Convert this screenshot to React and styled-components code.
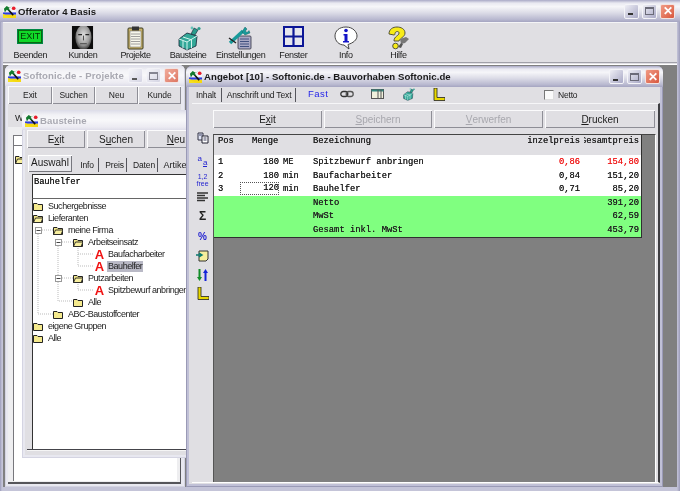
import React from 'react';
import styled, { createGlobalStyle } from 'styled-components';

const GlobalStyle = createGlobalStyle`
  html, body {
    margin: 0;
    width: 680px;
    height: 491px;
    overflow: hidden;
    background: #808080;
  }
  * { box-sizing: border-box; }
`;

const SILVER = '#e0dfe3';
const UI_FONT = '"Liberation Sans", Arial, sans-serif';
const MONO_FONT = '"Liberation Mono", "Courier New", monospace';

const MainFrame = styled.div`
  width: 680px;
  height: 491px;
  display: flex;
  flex-direction: column;
  padding: 0 3px 4px;
  background: linear-gradient(90deg, #9c9cba 0, #c4c4d8 2px, #c4c4d8 677px, #9c9cba 680px);
  font-family: ${UI_FONT};
  color: #1c1c1c;
  filter: blur(0.4px);
`;

const TitleBar = styled.div`
  flex: none;
  height: ${(p) => p.$height || 21}px;
  margin: 0 -3px;
  padding: 0 ${(p) => p.$padRight ?? 3}px 0 3px;
  display: flex;
  align-items: center;
  gap: 2px;
  background: ${(p) =>
    p.$active
      ? 'linear-gradient(#a9a9c6 0, #e9e9f1 14%, #f6f6f9 30%, #dcdce7 58%, #b9b9d0 88%, #a5a5c1 100%)'
      : 'linear-gradient(#dcdce8 0, #f2f2f6 25%, #f8f8fa 50%, #ecebf2 85%, #dedde9 100%)'};
`;

const TitleText = styled.span`
  flex: 1;
  min-width: 0;
  font-size: 9.6px;
  font-weight: 700;
  letter-spacing: ${(p) => (p.$active ? '0.05px' : '0.1px')};
  color: ${(p) => (p.$active ? '#1a1a1a' : '#a9a9b2')};
  white-space: nowrap;
  overflow: hidden;
`;

const CaptionButtons = styled.div`
  display: flex;
  gap: 3px;
  flex: none;
`;

const CaptionButton = styled.div`
  width: 15px;
  height: 15px;
  border-radius: 2px;
  border: 1px solid ${(p) => (p.$close ? '#f3e3e0' : '#f4f4f8')};
  display: flex;
  align-items: center;
  justify-content: center;
  background: ${(p) =>
    p.$close
      ? 'linear-gradient(135deg, #f09a84, #d9583e)'
      : p.$active
        ? 'linear-gradient(135deg, #eeeef5, #a9a9c6)'
        : 'linear-gradient(135deg, #f6f6fa, #cfcfe0)'};
  opacity: ${(p) => (p.$active ? 1 : 0.8)};
`;

const MinMark = styled.i`
  width: 5px;
  height: 2px;
  margin-top: 6px;
  margin-right: 3px;
  background: #333;
`;

const MaxMark = styled.i`
  width: 9px;
  height: 8px;
  border: 1px solid #6a6a78;
  border-top-width: 2px;
`;

const CloseMark = styled.span`
  font-family: ${UI_FONT};
  font-weight: 700;
  font-size: 12px;
  line-height: 1;
  color: #fff;
`;

const Toolbar = styled.div`
  flex: none;
  height: 40px;
  padding-left: 1px;
  display: grid;
  grid-template-columns: repeat(8, 52.6px);
  background: ${SILVER};
  border-top: 1px solid #f4f4f6;
`;

const ToolItem = styled.div`
  display: flex;
  flex-direction: column;
  align-items: center;
  font-size: 9px;
  letter-spacing: -0.35px;
  white-space: nowrap;
`;

const ToolIcon = styled.div`
  height: 26px;
  padding-top: 3px;
  margin-bottom: 1px;
`;

const ExitSign = styled.div`
  width: 24px;
  height: 13px;
  margin-top: 4px;
  background: #10d828;
  border: 1px solid #0a6a10;
  outline: 1px solid #084;
  color: #053305;
  font-size: 9px;
  line-height: 11px;
  text-align: center;
  letter-spacing: 0;
`;

const Etch = styled.div`
  flex: none;
  height: 3px;
  background: ${SILVER};
  border-top: 1px solid #a0a0a8;
  border-bottom: 1px solid #fff;
`;

const Desktop = styled.div`
  flex: 1;
  position: relative;
  overflow: hidden;
  background: #808080;
`;

const Window = styled.div`
  position: absolute;
  left: ${(p) => p.$left}px;
  top: ${(p) => p.$top}px;
  width: ${(p) => p.$width}px;
  height: ${(p) => p.$height}px;
  display: flex;
  flex-direction: column;
  padding: 0 ${(p) => p.$padRight ?? 3}px 3px 3px;
  border-radius: 6px 6px 0 0;
  overflow: hidden;
  background: ${(p) => (p.$active ? '#c0c0d6' : '#e8e8f0')};
  box-shadow: inset 0 0 0 1px ${(p) => (p.$active ? '#9a9ab6' : '#d4d4e2')};
`;

const Client = styled.div`
  flex: 1;
  min-height: 0;
  display: flex;
  flex-direction: column;
  background: ${(p) => p.$bg || SILVER};
  padding: ${(p) => p.$padding || '0'};
`;

const ButtonRow = styled.div`
  flex: none;
  display: flex;
  gap: ${(p) => p.$gap ?? 1}px;
  margin-left: ${(p) => p.$indent || 0}px;
  height: ${(p) => p.$height}px;
`;

const PushButton = styled.div`
  width: ${(p) => p.$width}px;
  flex: none;
  display: flex;
  align-items: center;
  justify-content: center;
  font-size: ${(p) => p.$size || 10}px;
  letter-spacing: ${(p) => (p.$size ? '-0.1px' : '0')};
  color: ${(p) => (p.$disabled ? '#a8a8ae' : '#1c1c1c')};
  background: ${SILVER};
  box-shadow: inset 1px 1px #fbfbfc, inset -1px -1px #8e8e96;
  u { text-decoration: underline; }
`;

const ProjectTab = styled.div`
  margin: 8px 0 2px 7px;
  width: 30px;
  height: 13px;
  font-size: 9px;
  line-height: 13px;
`;

const ProjectPage = styled.div`
  flex: 1;
  display: flex;
  flex-direction: column;
  padding: 8px 3px 1px 5px;
  background: #eeeef0;
  border-bottom: 2px solid #55555a;
  border-right: 1px solid #55555a;
`;

const ProjectInput = styled.div`
  height: 11px;
  flex: none;
  background: #fff;
  border: 1px solid #77777c;
  border-right: 0;
`;

const ProjectList = styled.div`
  flex: 1;
  padding: 4px 1px;
  background: #fff;
  border-left: 1px solid #77777c;
`;

const TabRow = styled.div`
  flex: none;
  height: ${(p) => p.$height}px;
  margin-top: ${(p) => p.$top || 0}px;
  display: flex;
  align-items: ${(p) => p.$align || 'center'};
  padding-left: ${(p) => p.$indent || 0}px;
`;

const Tab = styled.div`
  flex: none;
  width: ${(p) => p.$width}px;
  margin-right: ${(p) => p.$gap ?? 3}px;
  padding-right: ${(p) => p.$padRight || 0}px;
  height: ${(p) => (p.$active ? 17 : 14)}px;
  text-align: center;
  line-height: ${(p) => (p.$active ? 16 : 14)}px;
  font-size: ${(p) => p.$size || 8.5}px;
  letter-spacing: ${(p) => (p.$size ? 0 : '-0.15px')};
  white-space: nowrap;
  background: ${(p) => (p.$active ? '#e8e8ec' : 'transparent')};
  box-shadow: ${(p) =>
    p.$active
      ? 'inset 1px 1px #fff, inset -1px -1px #77777e'
      : 'inset -1px 0 #55555c'};
`;

const BlockFrame = styled.div`
  flex: 1;
  min-height: 0;
  margin-top: 2px;
  padding-left: 5px;
  display: flex;
  flex-direction: column;
  background: ${SILVER};
  border-bottom: 1px solid #44444a;
  box-shadow: 0 1px 0 #f5f5f5;
`;

const SearchBox = styled.div`
  flex: none;
  height: 25px;
  padding: 2px 1px;
  background: #fff;
  border-top: 1px solid #333;
  border-left: 1px solid #333;
  border-bottom: 1px solid #666;
  font-family: ${MONO_FONT};
  font-size: 8.8px;
  letter-spacing: -0.1px;
  text-shadow: 0 0 0.5px #222;
`;

const TreeList = styled.div`
  flex: 1;
  position: relative;
  padding-top: 1px;
  background: #fff;
  border-left: 1px solid #333;
  font-size: 9px;
  letter-spacing: -0.46px;
`;

const TreeLines = styled.svg`
  position: absolute;
  left: 0;
  top: 0;
  width: 120px;
  height: 150px;
`;

const TreeRow = styled.div`
  position: relative;
  height: 12px;
  display: flex;
  align-items: center;
  padding-left: ${(p) => p.$indent}px;
  white-space: nowrap;
`;

const TreeLabel = styled.span`
  margin-left: ${(p) => p.$gap ?? 4}px;
  padding: 0 1px;
  height: 11px;
  line-height: 11px;
  background: ${(p) => (p.$selected ? '#b9b9c6' : 'transparent')};
`;

const ArticleGlyph = styled.span`
  width: 11px;
  text-align: center;
  font-weight: 700;
  font-size: 13px;
  letter-spacing: 0;
  line-height: 11px;
  height: 11px;
  color: #f01010;
`;

const OfferTabs = styled.div`
  flex: none;
  height: 16px;
  display: flex;
  align-items: center;
  padding-left: 5px;
  position: relative;
`;

const FastLabel = styled.span`
  margin-left: 12px;
  width: 32px;
  margin-top: -3px;
  font-size: 9.5px;
  letter-spacing: 0.5px;
  color: #2525e8;
`;

const TopIcon = styled.div`
  flex: none;
  width: 31px;
  display: flex;
  align-items: center;
  margin-top: -2px;
`;

const NettoCheck = styled.div`
  position: absolute;
  left: 355px;
  top: 3px;
  display: flex;
  align-items: center;
  gap: 4px;
  font-size: 8.5px;
  letter-spacing: -0.2px;
`;

const CheckBox = styled.div`
  width: 10px;
  height: 10px;
  background: #fafafa;
  border-top: 1px solid #777;
  border-left: 1px solid #777;
  border-right: 1px solid #ddd;
  border-bottom: 1px solid #ddd;
`;

const OfferPage = styled.div`
  flex: 1;
  min-height: 0;
  display: flex;
  flex-direction: column;
  margin: 0 0 1px 3px;
  padding-top: 6px;
  background: ${SILVER};
  border-top: 1px solid #f6f6f8;
  border-right: 2px solid #3e3e42;
  border-bottom: 1px solid #fff;
`;

const OfferBody = styled.div`
  flex: 1;
  min-height: 0;
  display: flex;
  margin-top: 6px;
`;

const SideTools = styled.div`
  flex: none;
  width: 21px;
  display: flex;
  flex-direction: column;
  align-items: center;
`;

const SideTool = styled.div`
  flex: none;
  height: ${(p) => p.$height || 19}px;
  margin-top: ${(p) => p.$top || 0}px;
  width: 21px;
  display: flex;
  flex-direction: ${(p) => (p.$stack ? 'column' : 'row')};
  align-items: center;
  justify-content: center;
  color: ${(p) => p.$color || '#222'};
  font-size: ${(p) => p.$size || 8}px;
  font-weight: ${(p) => p.$weight || 400};
  line-height: 7px;
`;

const LowerLetter = styled.span`
  margin: 6px 0 0 1px;
  border-bottom: 1px solid #2424d0;
`;

const RaisedLetter = styled.span`
  margin-bottom: 3px;
`;

const GridArea = styled.div`
  flex: 1;
  min-width: 0;
  background: #808080;
  border-top: 1px solid #444;
  border-left: 1px solid #555;
  margin-right: 2px;
  border-right: 1px solid #fff;
`;

const OfferGrid = styled.div`
  width: 428px;
  border-right: 1px solid #303030;
  border-bottom: 1px solid #303030;
  font-family: ${MONO_FONT};
  font-size: 8.8px;
  color: #222;
  text-shadow: 0 0 0.5px currentColor;
`;

const GridRow = styled.div`
  display: grid;
  grid-template-columns: 34px 27px 34px 215px 52px 59px;
  padding-left: 4px;
  height: ${(p) => p.$height || 13.6}px;
  line-height: ${(p) => (p.$header ? 12 : 13.4)}px;
  background: ${(p) => p.$bg || '#fff'};
`;

const Cell = styled.div`
  white-space: nowrap;
  display: flex;
  overflow: hidden;
  justify-content: ${(p) => (p.$right ? 'flex-end' : 'flex-start')};
  padding-left: ${(p) => p.$pad || 0}px;
  padding-top: ${(p) => (p.$flush ? 0 : 1)}px;
  margin-left: ${(p) => p.$inset || 0}px;
  color: ${(p) => (p.$alert ? '#f02020' : 'inherit')};
  span { flex: none; }
`;

const FocusCell = styled(Cell)`
  margin-left: -12px;
  height: 13px;
  outline: 1px dotted #555;
  outline-offset: -1px;
`;

// small drawings

const AppIcon = () => (
  <svg width="13" height="13" viewBox="0 0 14 14" style={{ flex: 'none' }}>
    <rect width="14" height="14" fill="#f4f4f4" />
    <rect y="8" width="14" height="2.5" fill="#2a3ce0" />
    <path d="M0 14V9.5L9 14z" fill="#f5e020" />
    <path d="M0 10.5 8 14H14V10.5z" fill="#f5d810" />
    <path d="M4 3 11 11" stroke="#111" strokeWidth="1.8" />
    <path d="M1 4 4 1 7 3 10 1 6 4 8 7 4 5 2 8z" fill="#127a2e" />
    <circle cx="11.5" cy="3.5" r="2" fill="#e81c2c" />
  </svg>
);

const Caption = ({ active }) => (
  <CaptionButtons>
    <CaptionButton $active={active}><MinMark /></CaptionButton>
    <CaptionButton $active={active}><MaxMark /></CaptionButton>
    <CaptionButton $active={active} $close><CloseMark>✕</CloseMark></CaptionButton>
  </CaptionButtons>
);

const FaceIcon = () => (
  <svg width="23" height="23" viewBox="0 0 22 24">
    <defs>
      <radialGradient id="face" cx="50%" cy="42%" r="55%">
        <stop offset="0" stopColor="#e4e4e4" />
        <stop offset="0.7" stopColor="#9a9a9a" />
        <stop offset="1" stopColor="#444" />
      </radialGradient>
    </defs>
    <rect width="22" height="24" fill="#0c0c0c" />
    <ellipse cx="12" cy="12" rx="8.500" ry="13" fill="url(#face)" />
    <path d="M6.500 9h4M14 9h4" stroke="#222" strokeWidth="1.400" />
    <path d="M12 10v5M8.500 18.500h7" stroke="#444" strokeWidth="1" />
  </svg>
);

const ClipboardIcon = () => (
  <svg width="17" height="24" viewBox="0 0 17 24">
    <rect x="1" y="2" width="15" height="21" rx="1" fill="#c9b36a" stroke="#3a3a20" />
    <rect x="3" y="5" width="11" height="16" fill="#f6f6ea" stroke="#666" strokeWidth="0.5" />
    <path d="M4 8h9M4 10.5h9M4 13h9M4 15.5h9M4 18h9" stroke="#8a8a8a" strokeWidth="0.8" />
    <rect x="5" y="0.5" width="7" height="4" fill="#333" />
  </svg>
);

const CubesIcon = ({ size = 25 }) => (
  <svg width={size} height={size} viewBox="0 0 25 25">
    <path d="M3 13 11 7 21 10 20 20 11 24 3 20z" fill="#33a898" stroke="#123" strokeWidth="0.8" />
    <path d="M3 13 11 16 21 10M11 16V24M7 11l9 3M7 14.5V22M15.5 13v9" stroke="#d4f4ee" strokeWidth="1" fill="none" />
    <path d="M15 8 18 2 22 4 19 9z" fill="#2a9c8c" stroke="#123" strokeWidth="0.6" />
    <circle cx="23" cy="2.5" r="1.6" fill="#2a9c8c" />
    <circle cx="16" cy="2" r="1.4" fill="#66c4b8" />
  </svg>
);

const SettingsIcon = () => (
  <svg width="25" height="24" viewBox="0 0 25 24">
    <rect x="10" y="10" width="13" height="13" rx="1" fill="#a8a8c4" stroke="#334" strokeWidth="0.8" />
    <path d="M12 13h9M12 15.5h9M12 18h9M12 20.5h9" stroke="#405080" strokeWidth="1" />
    <path d="M2 17 15 5" stroke="#189a9a" strokeWidth="3.4" />
    <path d="M14 6 17 1 19 3 17.5 5 19 6.5 21 4.5 22 7 17 9z" fill="#189a9a" stroke="#0a5050" strokeWidth="0.4" />
    <path d="M1 12 8 17" stroke="#222" strokeWidth="1.4" />
  </svg>
);

const GridIcon = () => (
  <svg width="21" height="21" viewBox="0 0 21 21">
    <rect x="1" y="1" width="19" height="19" fill="#e6e6ee" stroke="#0c1696" strokeWidth="2" />
    <path d="M10.5 1v19M1 10.5h19" stroke="#0c1696" strokeWidth="2.2" />
  </svg>
);

const InfoIcon = () => (
  <svg width="26" height="24" viewBox="0 0 26 24">
    <path d="M13 1C6 1 2 5 2 10s4 9 9 9l5 4-1-4.500C20 17 24 14 24 10S20 1 13 1z" fill="#fff" stroke="#333" strokeWidth="0.9" />
    <circle cx="13" cy="4.500" r="1.800" fill="#1414c8" />
    <path d="M10.500 8h4v7h1.500v1.500h-6V15h1.500V9.500h-1z" fill="#1414c8" />
  </svg>
);

const HelpIcon = () => (
  <svg width="24" height="25" viewBox="0 0 24 25">
    <path d="M3 8C3 3 7 1 11 1s8 2 8 6c0 4-5 5-6 8H8c0-5 5-5 5-8 0-2-3-2-4 0 0 1 0 2-1 2z" fill="#f8ec18" stroke="#443" strokeWidth="0.9" />
    <circle cx="9.500" cy="20" r="2.800" fill="#f8ec18" stroke="#443" strokeWidth="0.9" />
    <path d="M14 13l6-2 3 2-4 4-4 1z" fill="#777" />
    <path d="M12 21l3-4 2 1-2 4z" fill="#555" />
  </svg>
);

const FolderIcon = ({ open }) => (
  <svg width="10" height="9" viewBox="0 0 10 9" style={{ flex: 'none' }}>
    <path d="M0.500 8.500V1.500H4l1 1h4.500v6z" fill="#f4e98c" stroke="#222" />
    {open && <path d="M0.500 8.500 2.500 4H10L8 8.500z" fill="#f8ef9e" stroke="#222" strokeWidth="0.9" />}
  </svg>
);

const ChainIcon = () => (
  <svg width="14" height="8" viewBox="0 0 14 8">
    <rect x="0.800" y="1.500" width="7" height="5" rx="2.500" fill="none" stroke="#333" strokeWidth="1.300" />
    <rect x="6.200" y="1.500" width="7" height="5" rx="2.500" fill="none" stroke="#555" strokeWidth="1.300" />
  </svg>
);

const TableIcon = () => (
  <svg width="13" height="10" viewBox="0 0 13 10">
    <rect x="0.500" y="0.500" width="12" height="9" fill="#f0f0dc" stroke="#555" />
    <rect x="0.500" y="0.500" width="12" height="2" fill="#338880" />
    <path d="M7 1v8M10 1v8" stroke="#555" />
  </svg>
);

const RulerIcon = () => (
  <svg width="12" height="13" viewBox="0 0 12 13">
    <path d="M1 0H4V9.500H12V12.500H1z" fill="#e8d800" stroke="#222" strokeWidth="0.800" />
  </svg>
);

const CopyIcon = () => (
  <svg width="12" height="12" viewBox="0 0 12 12" style={{ flex: 'none' }}>
    <path d="M1 1H6V8H1z" fill="#dfe4f4" stroke="#334" />
    <path d="M5 4H11V11H5z" fill="#fff" stroke="#223" />
    <path d="M6.500 6h3M6.500 8h3M2 3h3" stroke="#446" />
  </svg>
);

const LinesIcon = () => (
  <svg width="11" height="10" viewBox="0 0 11 10">
    <path d="M0 1h11M0 3.500h8M0 6h11M0 8.500h8" stroke="#333" strokeWidth="1.400" />
  </svg>
);

const NoteIcon = () => (
  <svg width="13" height="12" viewBox="0 0 13 12">
    <path d="M3 1H12V9L10 11H3z" fill="#f6ee9c" stroke="#333" />
    <path d="M0 5H5M3 3l3 2-3 2" stroke="#0a7a70" strokeWidth="1.500" fill="none" />
  </svg>
);

const UpDownIcon = () => (
  <svg width="11" height="12" viewBox="0 0 11 12">
    <path d="M2.500 0V9" stroke="#128c28" strokeWidth="2" />
    <path d="M0 8H5L2.500 12z" fill="#128c28" />
    <path d="M8.500 3V12" stroke="#1424d8" strokeWidth="2" />
    <path d="M6 4H11L8.500 0z" fill="#1424d8" />
  </svg>
);

const Tree = () => (
  <TreeList>
    <TreeLines viewBox="0 0 120 150">
      <g stroke="#bbb" strokeDasharray="1 1" fill="none">
        <path d="M5 31V115H20M5 31H20" />
        <path d="M25 43V102H40M25 43H40M25 79H40" />
        <path d="M45 43V67H61M45 55H61M45 79V91H61" />
      </g>
      <g fill="#fff" stroke="#999">
        <rect x="2.500" y="28.500" width="6" height="6" />
        <rect x="22.500" y="40.500" width="6" height="6" />
        <rect x="22.500" y="76.500" width="6" height="6" />
      </g>
      <path d="M3.500 31.500h4M23.500 43.500h4M23.500 79.500h4" stroke="#444" />
    </TreeLines>
    <TreeRow $indent={0}><FolderIcon /><TreeLabel>Suchergebnisse</TreeLabel></TreeRow>
    <TreeRow $indent={0}><FolderIcon open /><TreeLabel>Lieferanten</TreeLabel></TreeRow>
    <TreeRow $indent={20}><FolderIcon open /><TreeLabel>meine Firma</TreeLabel></TreeRow>
    <TreeRow $indent={40}><FolderIcon open /><TreeLabel>Arbeitseinsatz</TreeLabel></TreeRow>
    <TreeRow $indent={61}><ArticleGlyph>A</ArticleGlyph><TreeLabel $gap={2}>Baufacharbeiter</TreeLabel></TreeRow>
    <TreeRow $indent={61}><ArticleGlyph>A</ArticleGlyph><TreeLabel $gap={2} $selected>Bauhelfer</TreeLabel></TreeRow>
    <TreeRow $indent={40}><FolderIcon open /><TreeLabel>Putzarbeiten</TreeLabel></TreeRow>
    <TreeRow $indent={61}><ArticleGlyph>A</ArticleGlyph><TreeLabel $gap={2}>Spitzbewurf anbringen</TreeLabel></TreeRow>
    <TreeRow $indent={40}><FolderIcon /><TreeLabel>Alle</TreeLabel></TreeRow>
    <TreeRow $indent={20}><FolderIcon /><TreeLabel>ABC-Baustoffcenter</TreeLabel></TreeRow>
    <TreeRow $indent={0}><FolderIcon /><TreeLabel>eigene Gruppen</TreeLabel></TreeRow>
    <TreeRow $indent={0}><FolderIcon /><TreeLabel>Alle</TreeLabel></TreeRow>
  </TreeList>
);

const toolItems = [
  { label: 'Beenden', icon: <ExitSign>EXIT</ExitSign> },
  { label: 'Kunden', icon: <FaceIcon /> },
  { label: 'Projekte', icon: <ClipboardIcon /> },
  { label: 'Bausteine', icon: <CubesIcon /> },
  { label: 'Einstellungen', icon: <SettingsIcon /> },
  { label: 'Fenster', icon: <GridIcon /> },
  { label: 'Info', icon: <InfoIcon /> },
  { label: 'Hilfe', icon: <HelpIcon /> },
];

const positions = [
  { pos: '1', qty: '180', unit: 'ME', name: 'Spitzbewurf anbringen', price: '0,86', total: '154,80', alert: true },
  { pos: '2', qty: '180', unit: 'min', name: 'Baufacharbeiter', price: '0,84', total: '151,20' },
  { pos: '3', qty: '120', unit: 'min', name: 'Bauhelfer', price: '0,71', total: '85,20', focus: true },
];

const totals = [
  { name: 'Netto', total: '391,20' },
  { name: 'MwSt', total: '62,59' },
  { name: 'Gesamt inkl. MwSt', total: '453,79' },
];

export default function App() {
  return (
    <>
      <GlobalStyle />
      <MainFrame>
        <TitleBar $active $height={22} $padRight={5}>
          <AppIcon />
          <TitleText $active>Offerator 4 Basis</TitleText>
          <Caption active />
        </TitleBar>
        <Toolbar>
          {toolItems.map((item) => (
            <ToolItem key={item.label}>
              <ToolIcon>{item.icon}</ToolIcon>
              {item.label}
            </ToolItem>
          ))}
        </Toolbar>
        <Etch />
        <Desktop>
          <Window $left={2} $top={0} $width={180} $height={422} $padRight={4}>
            <TitleBar $padRight={5}>
              <AppIcon />
              <TitleText>Softonic.de - Projekte</TitleText>
              <Caption />
            </TitleBar>
            <Client>
              <ButtonRow $height={18} $gap={0}>
                <PushButton $width={44} $size={8.5}>Exit</PushButton>
                <PushButton $width={43} $size={8.5}>Suchen</PushButton>
                <PushButton $width={43} $size={8.5}>Neu</PushButton>
                <PushButton $width={43} $size={8.5}>Kunde</PushButton>
              </ButtonRow>
              <ProjectTab>Werte</ProjectTab>
              <ProjectPage>
                <ProjectInput />
                <ProjectList><FolderIcon open /></ProjectList>
              </ProjectPage>
            </Client>
          </Window>

          <Window $left={19} $top={45} $width={230} $height={348}>
            <TitleBar $height={20}>
              <AppIcon />
              <TitleText>Bausteine</TitleText>
            </TitleBar>
            <Client $padding="0 0 5px 2px">
              <ButtonRow $height={18} $gap={2}>
                <PushButton $width={58}>E<u>x</u>it</PushButton>
                <PushButton $width={58}>S<u>u</u>chen</PushButton>
                <PushButton $width={58}><u>N</u>eu</PushButton>
              </ButtonRow>
              <TabRow $height={17} $top={7} $indent={1} $align="flex-end">
                <Tab $active $width={44} $gap={3} $size={10}>Auswahl</Tab>
                <Tab $width={24}>Info</Tab>
                <Tab $width={25}>Preis</Tab>
                <Tab $width={28}>Daten</Tab>
                <Tab $width={30} $size={9}>Artikel</Tab>
              </TabRow>
              <BlockFrame>
                <SearchBox>Bauhelfer</SearchBox>
                <Tree />
              </BlockFrame>
            </Client>
          </Window>

          <Window $active $left={183} $top={1} $width={477} $height={421}>
            <TitleBar $active>
              <AppIcon />
              <TitleText $active>Angebot [10] - Softonic.de - Bauvorhaben Softonic.de</TitleText>
              <Caption active />
            </TitleBar>
            <Client>
              <OfferTabs>
                <Tab $width={28} $gap={2} $padRight={4}>Inhalt</Tab>
                <Tab $width={72} $gap={0} $padRight={2}>Anschrift und Text</Tab>
                <FastLabel>Fast</FastLabel>
                <TopIcon><ChainIcon /></TopIcon>
                <TopIcon><TableIcon /></TopIcon>
                <TopIcon><CubesIcon size={13} /></TopIcon>
                <TopIcon><RulerIcon /></TopIcon>
                <NettoCheck><CheckBox />Netto</NettoCheck>
              </OfferTabs>
              <OfferPage>
                <ButtonRow $height={18} $indent={21} $gap={2}>
                  <PushButton $width={109}>E<u>x</u>it</PushButton>
                  <PushButton $width={108} $disabled><u>S</u>peichern</PushButton>
                  <PushButton $width={109} $disabled><u>V</u>erwerfen</PushButton>
                  <PushButton $width={110}><u>D</u>rucken</PushButton>
                </ButtonRow>
                <OfferBody>
                  <SideTools>
                    <SideTool $height={8}><CopyIcon /></SideTool>
                    <SideTool $height={16} $top={10} $color="#2424d0" $size={8}>
                      <RaisedLetter>a</RaisedLetter>
                      <LowerLetter>a</LowerLetter>
                    </SideTool>
                    <SideTool $height={16} $top={4} $stack $color="#2424d0" $size={7}>
                      <span>1,2</span><span>free</span>
                    </SideTool>
                    <SideTool $height={18}><LinesIcon /></SideTool>
                    <SideTool $height={21} $size={12} $weight={700}>Σ</SideTool>
                    <SideTool $size={10} $weight={700} $color="#2424d0">%</SideTool>
                    <SideTool><NoteIcon /></SideTool>
                    <SideTool><UpDownIcon /></SideTool>
                    <SideTool><RulerIcon /></SideTool>
                  </SideTools>
                  <GridArea>
                    <OfferGrid>
                      <GridRow $bg={SILVER} $height={20} $header>
                        <Cell $flush>Pos</Cell>
                        <Cell $flush>Menge</Cell>
                        <Cell $flush />
                        <Cell $flush>Bezeichnung</Cell>
                        <Cell $flush $right><span>Einzelpreis</span></Cell>
                        <Cell $flush $right $inset={4}><span>Gesamtpreis</span></Cell>
                      </GridRow>
                      {positions.map((row) => {
                        const Qty = row.focus ? FocusCell : Cell;
                        return (
                          <GridRow key={row.pos}>
                            <Cell>{row.pos}</Cell>
                            <Qty $right $flush={row.focus}>{row.qty}</Qty>
                            <Cell $pad={4}>{row.unit}</Cell>
                            <Cell>{row.name}</Cell>
                            <Cell $right $alert={row.alert}>{row.price}</Cell>
                            <Cell $right $alert={row.alert}>{row.total}</Cell>
                          </GridRow>
                        );
                      })}
                      {totals.map((row) => (
                        <GridRow key={row.name} $bg="#80ff80">
                          <Cell />
                          <Cell />
                          <Cell />
                          <Cell>{row.name}</Cell>
                          <Cell />
                          <Cell $right>{row.total}</Cell>
                        </GridRow>
                      ))}
                    </OfferGrid>
                  </GridArea>
                </OfferBody>
              </OfferPage>
            </Client>
          </Window>
        </Desktop>
      </MainFrame>
    </>
  );
}
